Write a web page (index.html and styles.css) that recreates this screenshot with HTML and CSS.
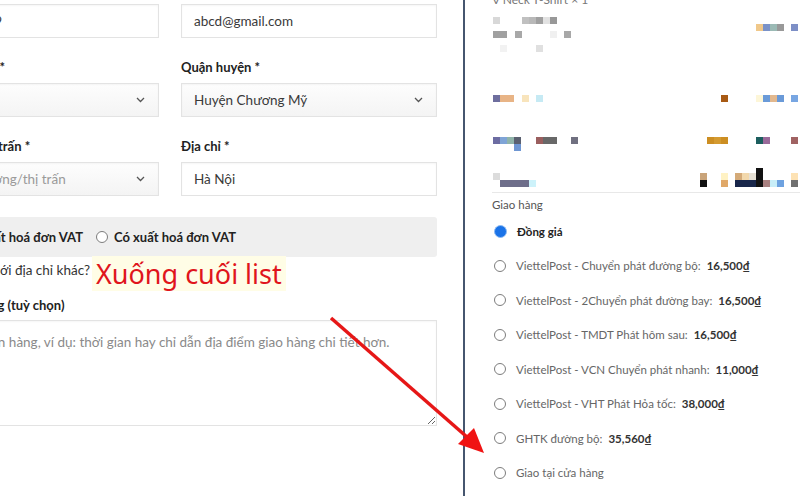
FILE: index.html
```html
<!DOCTYPE html>
<html lang="vi">
<head>
<meta charset="utf-8">
<title>Thanh toán</title>
<link rel="stylesheet" href="styles.css">
</head>
<body>
<div class="page">
  <main class="form-col">
    <div class="form">
      <div class="fields">
        <div class="field">
          <div class="label">Số điện thoại *</div>
          <div class="input">84912345679</div>
        </div>
        <div class="field">
          <div class="label">Địa chỉ email *</div>
          <div class="input">abcd@gmail.com</div>
        </div>
        <div class="field">
          <div class="label">Tỉnh/Thành phố *</div>
          <div class="input select"><span>Hà Nội</span>
            <svg class="chev" width="9" height="6" viewBox="0 0 9 6"><path d="M1 1l3.5 3.5L8 1" fill="none" stroke="#555" stroke-width="1.3"/></svg></div>
        </div>
        <div class="field">
          <div class="label">Quận huyện *</div>
          <div class="input select"><span>Huyện Chương Mỹ</span>
            <svg class="chev" width="9" height="6" viewBox="0 0 9 6"><path d="M1 1l3.5 3.5L8 1" fill="none" stroke="#555" stroke-width="1.3"/></svg></div>
        </div>
        <div class="field">
          <div class="label">Xã/Phường/Thị trấn *</div>
          <div class="input select"><span class="placeholder">Chọn xã/phường/thị trấn</span>
            <svg class="chev" width="9" height="6" viewBox="0 0 9 6"><path d="M1 1l3.5 3.5L8 1" fill="none" stroke="#555" stroke-width="1.3"/></svg></div>
        </div>
        <div class="field">
          <div class="label">Địa chỉ *</div>
          <div class="input">Hà Nội</div>
        </div>
      </div>

      <div class="vat">
        <label class="opt"><span class="radio"></span>Không xuất hoá đơn VAT</label>
        <label class="opt"><span class="radio"></span>Có xuất hoá đơn VAT</label>
      </div>

      <div class="ship-other"><span class="check"></span>Giao hàng tới địa chỉ khác?</div>

      <div class="label note-label">Ghi chú đơn hàng (tuỳ chọn)</div>
      <textarea class="note" placeholder="Ghi chú về đơn hàng, ví dụ: thời gian hay chỉ dẫn địa điểm giao hàng chi tiết hơn."></textarea>
    </div>
  </main>

  <aside class="order-col">
    <div class="item-title">V Neck T-Shirt × 1</div>
    <svg class="mosaic" width="308" height="184" viewBox="492 8 308 184">
      <rect x="493" y="17" width="7" height="7" fill="#d8d8d8"/>
      <rect x="522" y="17" width="7" height="7" fill="#c0c0c0"/>
      <rect x="529" y="17" width="7" height="7" fill="#b8b8b8"/>
      <rect x="536" y="17" width="7" height="7" fill="#a0a0a0"/>
      <rect x="543" y="17" width="7" height="7" fill="#e2e2e2"/>
      <rect x="550" y="17" width="7" height="7" fill="#989898"/>
      <rect x="493" y="31" width="14" height="7" fill="#a0a0a0"/>
      <rect x="515" y="31" width="7" height="7" fill="#a8a8a8"/>
      <rect x="550" y="31" width="7" height="7" fill="#f0f0f0"/>
      <rect x="564" y="31" width="7" height="7" fill="#a8a8a8"/>
      <rect x="500" y="45" width="7" height="7" fill="#f2f2f2"/>
      <rect x="536" y="45" width="7" height="7" fill="#e0e0e0"/>
      <rect x="756" y="24" width="7" height="7" fill="#f0c88a"/>
      <rect x="763" y="24" width="7" height="7" fill="#7a92c8"/>
      <rect x="770" y="24" width="7" height="7" fill="#9bbab5"/>
      <rect x="777" y="24" width="7" height="7" fill="#999999"/>
      <rect x="791" y="24" width="7" height="7" fill="#7d8fc6"/>
      <rect x="493" y="95" width="7" height="7" fill="#6e6e9e"/>
      <rect x="500" y="95" width="14" height="7" fill="#e8b486"/>
      <rect x="522" y="95" width="7" height="7" fill="#f8e4bc"/>
      <rect x="536" y="95" width="7" height="7" fill="#c6eaf4"/>
      <rect x="721" y="95" width="7" height="7" fill="#a85a14"/>
      <rect x="756" y="95" width="7" height="7" fill="#fdf6d8"/>
      <rect x="763" y="95" width="7" height="7" fill="#6a9ad8"/>
      <rect x="770" y="95" width="7" height="7" fill="#e2b88e"/>
      <rect x="777" y="95" width="7" height="7" fill="#6a9ad8"/>
      <rect x="791" y="95" width="7" height="7" fill="#78a6e2"/>
      <rect x="493" y="137" width="7" height="7" fill="#6c6ca2"/>
      <rect x="500" y="137" width="7" height="7" fill="#7fa4d6"/>
      <rect x="507" y="137" width="7" height="7" fill="#90b4aa"/>
      <rect x="514" y="137" width="7" height="7" fill="#5a6070"/>
      <rect x="514" y="144" width="7" height="7" fill="#6e96d2"/>
      <rect x="536" y="137" width="7" height="7" fill="#9a5e5e"/>
      <rect x="543" y="137" width="14" height="7" fill="#686868"/>
      <rect x="571" y="137" width="7" height="7" fill="#707080"/>
      <rect x="707" y="137" width="7" height="7" fill="#cc8e22"/>
      <rect x="714" y="137" width="7" height="7" fill="#d49a30"/>
      <rect x="721" y="137" width="7" height="7" fill="#cc8e22"/>
      <rect x="756" y="137" width="7" height="7" fill="#1c5e5e"/>
      <rect x="763" y="137" width="7" height="7" fill="#9a6a9a"/>
      <rect x="791" y="137" width="7" height="7" fill="#a06262"/>
      <rect x="493" y="173" width="7" height="7" fill="#dcdcdc"/>
      <rect x="500" y="180" width="29" height="7" fill="#6e6e8a"/>
      <rect x="529" y="180" width="7" height="7" fill="#cdf2fa"/>
      <rect x="700" y="173" width="7" height="7" fill="#c9a47a"/>
      <rect x="700" y="180" width="7" height="7" fill="#111111"/>
      <rect x="721" y="173" width="7" height="7" fill="#fff2c4"/>
      <rect x="721" y="180" width="7" height="7" fill="#e0a868"/>
      <rect x="735" y="173" width="7" height="7" fill="#d4aa78"/>
      <rect x="742" y="173" width="7" height="7" fill="#f2d8ac"/>
      <rect x="749" y="173" width="7" height="7" fill="#e6e0d4"/>
      <rect x="756" y="168" width="7" height="19" fill="#111111"/>
      <rect x="735" y="180" width="21" height="7" fill="#18264a"/>
      <rect x="763" y="180" width="7" height="7" fill="#a88080"/>
      <rect x="770" y="180" width="7" height="7" fill="#c8eef8"/>
      <rect x="777" y="180" width="7" height="7" fill="#6ea2e0"/>
      <rect x="791" y="173" width="7" height="7" fill="#fde2b4"/>
      <rect x="791" y="180" width="7" height="7" fill="#707070"/>
    </svg>
    <div class="divider"></div>
    <div class="ship-head">Giao hàng</div>
    <ul class="ship-list">
      <li class="ship-item active"><span class="radio checked"></span><span class="name">Đồng giá</span></li>
      <li class="ship-item"><span class="radio"></span><span class="name">ViettelPost - Chuyển phát đường bộ:</span><b class="price">16,500₫</b></li>
      <li class="ship-item"><span class="radio"></span><span class="name">ViettelPost - 2Chuyển phát đường bay:</span><b class="price">16,500₫</b></li>
      <li class="ship-item"><span class="radio"></span><span class="name">ViettelPost - TMDT Phát hôm sau:</span><b class="price">16,500₫</b></li>
      <li class="ship-item"><span class="radio"></span><span class="name">ViettelPost - VCN Chuyển phát nhanh:</span><b class="price">11,000₫</b></li>
      <li class="ship-item"><span class="radio"></span><span class="name">ViettelPost - VHT Phát Hỏa tốc:</span><b class="price">38,000₫</b></li>
      <li class="ship-item"><span class="radio"></span><span class="name">GHTK đường bộ:</span><b class="price">35,560₫</b></li>
      <li class="ship-item"><span class="radio"></span><span class="name">Giao tại cửa hàng</span></li>
    </ul>
  </aside>

  <div class="annotation">Xuống cuối list</div>
  <svg class="arrow" width="800" height="496" viewBox="0 0 800 496">
    <line x1="331" y1="318" x2="467" y2="437" stroke="#e61717" stroke-width="3.5"/>
    <polygon points="458,444 474,428 484,453" fill="#f01313"/>
  </svg>
</div>
</body>
</html>
```

FILE: styles.css
```css
* { box-sizing: border-box; }

body {
  margin: 0;
  font-family: Lato, "Noto Sans", sans-serif;
  background: #fff;
}

.page {
  position: relative;
  width: 800px;
  height: 496px;
  overflow: hidden;
  display: flex;
  background: #fff;
}

/* ---------- left: checkout form ---------- */
.form-col {
  width: 463px;
  flex: none;
}

.form {
  width: 534px;
  margin-left: -97px;
  margin-top: -22px;
}

.fields {
  display: grid;
  grid-template-columns: 256px 256px;
  column-gap: 22px;
  row-gap: 19px;
}

.field { min-width: 0; }

.label {
  font-weight: 700;
  font-size: 13px;
  line-height: 20px;
  color: #222;
  margin-bottom: 6px;
  white-space: nowrap;
}

.input {
  height: 34px;
  border: 1px solid #e3e3e3;
  padding: 0 13px 0 12px;
  font-size: 13.5px;
  color: #3a3a3a;
  display: flex;
  align-items: center;
  justify-content: space-between;
  white-space: nowrap;
  background: #fff;
  box-shadow: inset 0 1px 2px rgba(0, 0, 0, 0.04);
}

.select {
  background: linear-gradient(#fdfdfd, #f4f4f4);
}

.placeholder { color: #9a9a9a; }

.chev { flex: none; }

.vat {
  margin-top: 21px;
  height: 40px;
  background: #efefef;
  border-radius: 3px;
  display: flex;
  align-items: center;
  gap: 13px;
  padding-left: 18px;
  font-weight: 700;
  font-size: 13px;
  color: #222;
  white-space: nowrap;
}

.opt {
  display: flex;
  align-items: center;
  gap: 6px;
}

.radio {
  display: inline-block;
  width: 12px;
  height: 12px;
  border: 1px solid #7d7d7d;
  border-radius: 50%;
  background: #fff;
  flex: none;
}

.ship-other {
  margin-top: 3px;
  padding-left: 10px;
  line-height: 20px;
  font-size: 13.5px;
  color: #333;
  display: flex;
  align-items: center;
  gap: 6px;
  white-space: nowrap;
}

.check {
  width: 13px;
  height: 13px;
  border: 1px solid #777;
  border-radius: 2px;
  flex: none;
}

.note-label {
  margin-top: 15px;
  margin-bottom: 5px;
}

.note {
  display: block;
  width: 534px;
  height: 106px;
  margin: 0;
  border: 1px solid #e3e3e3;
  padding: 11px 12px;
  font-family: Lato, "Noto Sans", sans-serif;
  font-size: 13.5px;
  line-height: 20px;
  color: #333;
  box-shadow: inset 0 1px 2px rgba(0, 0, 0, 0.04);
  outline: none;
}

.note::placeholder { color: #8a8a8a; }

/* ---------- right: order summary ---------- */
.order-col {
  flex: 1;
  min-width: 0;
  border-left: 2px solid #46566f;
  padding-left: 27px;
  font-size: 11.5px;
  color: #666;
}

.item-title {
  margin-top: -8px;
  line-height: 16px;
  font-size: 12px;
  color: #777;
  white-space: nowrap;
}

.mosaic { display: block; }

.divider {
  border-top: 1px solid #e8e8e8;
}

.ship-head {
  padding-top: 4px;
  line-height: 16px;
  font-size: 11.5px;
  color: #555;
}

.ship-list {
  list-style: none;
  margin: 1px 0 0;
  padding: 0;
}

.ship-item {
  height: 34.5px;
  display: flex;
  align-items: center;
  padding-left: 2px;
  white-space: nowrap;
}

.ship-item .radio { margin-right: 10px; }

.radio.checked {
  width: 13px;
  height: 13px;
  border: 1.5px solid #8dbaf2;
  background: #1a73e8;
}

.active .name {
  font-weight: 700;
  color: #222;
}

.price {
  margin-left: 6px;
  color: #333;
  font-weight: 700;
}

/* ---------- overlays ---------- */
.annotation {
  position: absolute;
  left: 92px;
  top: 256px;
  padding: 0 4px;
  background: #fffde6;
  color: #e0151c;
  font-family: "Noto Sans", sans-serif;
  font-size: 27px;
  line-height: 35px;
  white-space: nowrap;
}

.arrow {
  position: absolute;
  left: 0;
  top: 0;
  pointer-events: none;
}
```
